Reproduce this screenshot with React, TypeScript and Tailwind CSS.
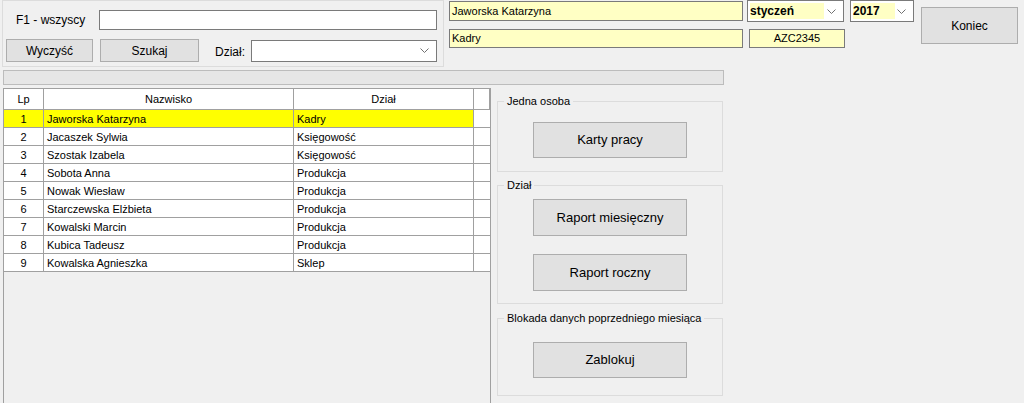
const rows = [
  { lp: 1, name: "Jaworska Katarzyna", dzial: "Kadry" },
  { lp: 2, name: "Jacaszek Sylwia", dzial: "Księgowość" },
  { lp: 3, name: "Szostak Izabela", dzial: "Księgowość" },
  { lp: 4, name: "Sobota Anna", dzial: "Produkcja" },
  { lp: 5, name: "Nowak Wiesław", dzial: "Produkcja" },
  { lp: 6, name: "Starczewska Elżbieta", dzial: "Produkcja" },
  { lp: 7, name: "Kowalski Marcin", dzial: "Produkcja" },
  { lp: 8, name: "Kubica Tadeusz", dzial: "Produkcja" },
  { lp: 9, name: "Kowalska Agnieszka", dzial: "Sklep" },
];

function Chevron() {
  return (
    <svg width="9" height="6" viewBox="0 0 9 6" className="shrink-0">
      <polyline points="0.5,0.5 4.5,4.5 8.5,0.5" fill="none" stroke="#707070" strokeWidth="1" />
    </svg>
  );
}

function WinButton({ label, className = "" }: { label: string; className?: string }) {
  return (
    <div
      className={`flex items-center justify-center border border-[#adadad] bg-[#e1e1e1] ${className}`}
    >
      {label}
    </div>
  );
}

function Group({
  title,
  className = "",
  children,
}: {
  title: string;
  className?: string;
  children: React.ReactNode;
}) {
  return (
    <div className={`relative border border-[#dcdcdc] ${className}`}>
      <span className="absolute -top-[8px] left-[6px] bg-[#f0f0f0] px-[3px] leading-[14px]">
        {title}
      </span>
      {children}
    </div>
  );
}

export default function App() {
  return (
    <div className="h-[403px] w-[1024px] overflow-hidden bg-[#f0f0f0] font-['Liberation_Sans',Arial,sans-serif] text-[11px] text-black">
      {/* top strip */}
      <div className="flex h-[67px]">
        <div className="ml-[2px] h-[67px] w-[442px] border border-[#dcdcdc]">
          <div className="mt-[9px] flex h-[20px] items-center">
            <span className="ml-[13px] w-[83px] text-[12px]">F1 - wszyscy</span>
            <div className="h-[20px] w-[338px] border border-[#7a7a7a] bg-white" />
          </div>
          <div className="mt-[9px] flex items-start text-[12px]">
            <WinButton label="Wyczyść" className="ml-[3px] h-[23px] w-[87px]" />
            <WinButton label="Szukaj" className="ml-[7px] h-[23px] w-[99px]" />
            <span className="ml-[16px] mt-[4px] w-[36px]">Dział:</span>
            <div className="mt-[1px] flex h-[22px] w-[186px] items-center justify-end border border-[#7a7a7a] bg-white pr-[7px]">
              <Chevron />
            </div>
          </div>
        </div>

        <div className="ml-[5px] flex items-start">
          <div className="flex w-[294px] flex-col">
            <div className="mt-[1px] flex h-[20px] items-center border border-[#7a7a7a] bg-[#ffffc4] pl-[2px]">
              Jaworska Katarzyna
            </div>
            <div className="mt-[8px] flex h-[19px] items-center border border-[#7a7a7a] bg-[#ffffc4] pl-[2px]">
              Kadry
            </div>
          </div>

          <div className="ml-[4px] flex flex-col">
            <div className="flex">
              <div className="flex h-[22px] w-[97px] items-start border border-[#7a7a7a] bg-white p-[2px] pr-[7px]">
                <span className="h-[16px] w-[74px] bg-[#ffffc4] pt-[1px] text-[12px] font-bold leading-[14px]">
                  styczeń
                </span>
                <span className="ml-auto mt-[6px]">
                  <Chevron />
                </span>
              </div>
              <div className="ml-[6px] flex h-[22px] w-[64px] items-start border border-[#7a7a7a] bg-white p-[2px] pr-[7px]">
                <span className="h-[16px] w-[42px] bg-[#ffffc4] pt-[1px] text-[12px] font-bold leading-[14px]">
                  2017
                </span>
                <span className="ml-auto mt-[6px]">
                  <Chevron />
                </span>
              </div>
            </div>
            <div className="ml-[2px] mt-[7px] flex h-[19px] w-[96px] items-center justify-center border border-[#7a7a7a] bg-[#ffffc4]">
              AZC2345
            </div>
          </div>

          <WinButton label="Koniec" className="ml-[7px] mt-[7px] h-[37px] w-[97px] text-[12px]" />
        </div>
      </div>

      {/* progress bar */}
      <div className="ml-[3px] mt-[3px] h-[15px] w-[721px] border border-[#bcbcbc] bg-[#e6e6e6]" />

      {/* bottom */}
      <div className="mt-[2px] flex items-start">
        <div className="ml-[3px] mt-[1px] h-[320px] w-[488px] border-l border-r border-t border-[#a0a0a0] bg-[#f0f0f0]">
          <div className="grid grid-cols-[40px_250px_180px_16px]">
            {["Lp", "Nazwisko", "Dział", ""].map((h, i) => (
              <div
                key={i}
                className="flex h-[21px] items-center justify-center border-b border-r border-[#a0a0a0] bg-white pt-[1px] last:border-r-0"
              >
                {h}
              </div>
            ))}
            {rows.map((r) => {
              const bg = r.lp === 1 ? "bg-[#ffff00]" : "bg-white";
              return [
                <div
                  key={`${r.lp}-a`}
                  className={`flex h-[18px] items-center justify-center border-b border-r border-[#a0a0a0] pt-[1px] ${bg}`}
                >
                  {r.lp}
                </div>,
                <div
                  key={`${r.lp}-b`}
                  className={`flex h-[18px] items-center border-b border-r border-[#a0a0a0] pl-[3px] pt-[1px] ${bg}`}
                >
                  {r.name}
                </div>,
                <div
                  key={`${r.lp}-c`}
                  className={`flex h-[18px] items-center border-b border-r border-[#a0a0a0] pl-[3px] pt-[1px] ${bg}`}
                >
                  {r.dzial}
                </div>,
                <div key={`${r.lp}-d`} className="h-[18px] border-b border-[#a0a0a0] bg-white" />,
              ];
            })}
          </div>
        </div>

        <div className="ml-[6px] flex w-[226px] flex-col text-[13px]">
          <Group title="Jedna osoba" className="mt-[14px] h-[71px] text-[11px]">
            <WinButton label="Karty pracy" className="mx-auto mt-[20px] h-[36px] w-[154px] text-[13px]" />
          </Group>
          <Group title="Dział" className="mt-[13px] h-[119px] text-[11px]">
            <WinButton
              label="Raport miesięczny"
              className="mx-auto mt-[13px] h-[37px] w-[154px] text-[13px]"
            />
            <WinButton
              label="Raport roczny"
              className="mx-auto mt-[18px] h-[37px] w-[154px] text-[13px]"
            />
          </Group>
          <Group title="Blokada danych poprzedniego miesiąca" className="mt-[14px] h-[78px] text-[11px]">
            <WinButton label="Zablokuj" className="mx-auto mt-[23px] h-[36px] w-[154px] text-[13px]" />
          </Group>
        </div>
      </div>
    </div>
  );
}
